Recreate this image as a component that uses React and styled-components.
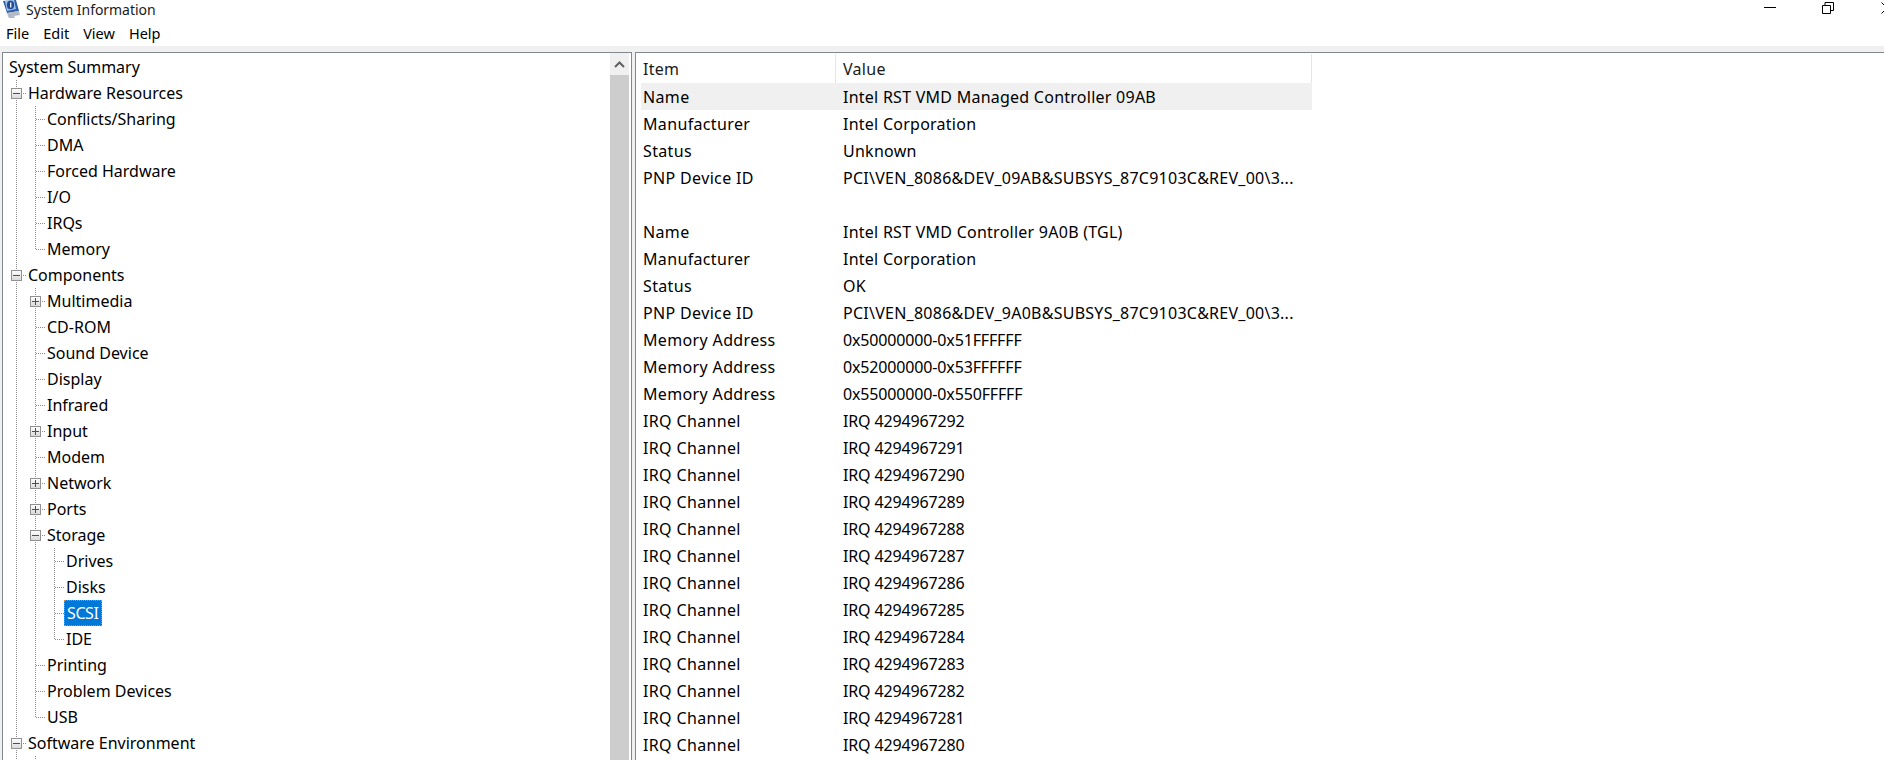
import styled, { createGlobalStyle } from "styled-components";

const GlobalStyle = createGlobalStyle`
  html, body {
    margin: 0;
    padding: 0;
    background: #fff;
    overflow: hidden;
  }
  body {
    font-family: "Noto Sans", "Open Sans", sans-serif;
    font-size: 16px;
    color: #000;
  }
`;

const Window = styled.div`
  width: 1884px;
  height: 760px;
  display: flex;
  flex-direction: column;
  overflow: hidden;
  background: #fff;
`;

const TitleBar = styled.div`
  height: 19px;
  display: flex;
  align-items: center;
  flex: none;
`;
const AppIconBox = styled.svg`
  width: 20px;
  height: 19px;
  margin-left: 2px;
  flex: none;
`;
const TitleText = styled.span`
  margin-left: 4px;
  flex: 1;
  font-size: 14px;
  letter-spacing: -0.05px;
  color: #1a1a1a;
`;
const WindowButton = styled.div`
  width: 58px;
  height: 19px;
  box-sizing: border-box;
  padding-top: 2px;
  display: flex;
  justify-content: center;
  flex: none;
`;
const CloseButton = styled(WindowButton)`
  width: 27px;
  padding-left: 24px;
  justify-content: flex-start;
  overflow: hidden;
  svg {
    flex: none;
  }
`;

const MenuBar = styled.div`
  height: 27px;
  display: flex;
  align-items: center;
  padding-left: 6px;
  gap: 14px;
  flex: none;
  font-size: 14.5px;
`;

const Workspace = styled.div`
  flex: 1;
  min-height: 0;
  display: flex;
  background: #f0f0f0;
  padding: 6px 0 0 2px;
`;

const TreePanel = styled.div`
  width: 630px;
  flex: none;
  display: flex;
  box-sizing: border-box;
  border: 1px solid #828790;
  border-bottom: none;
  background: #fff;
`;
const Tree = styled.div`
  flex: 1;
  padding: 1px 0 0 4px;
  overflow: hidden;
`;
const TreeRow = styled.div`
  height: 26px;
  display: flex;
  align-items: stretch;
`;
const DOTS_V = "repeating-linear-gradient(to bottom, #8a8a8a 0 1px, transparent 1px 2px)";
const DOTS_H = "repeating-linear-gradient(to right, #8a8a8a 0 1px, transparent 1px 2px)";
const GUIDES = {
  pass: `background-image: ${DOTS_V}; background-size: 1px 100%; background-position: 9px 0;`,
  tee: `background-image: ${DOTS_V}, ${DOTS_H};
    background-size: 1px 100%, 9px 1px;
    background-position: 9px 0, 10px 13px;`,
  end: `background-image: ${DOTS_V}, ${DOTS_H};
    background-size: 1px 13px, 9px 1px;
    background-position: 9px 0, 10px 13px;`,
};
const Guide = styled.div`
  width: 19px;
  flex: none;
  display: flex;
  align-items: center;
  justify-content: center;
  background-repeat: no-repeat;
  ${({ $kind }) => GUIDES[$kind]}
`;
const Expander = styled.svg`
  width: 11px;
  height: 11px;
  display: block;
`;
const TreeLabel = styled.span`
  padding: 0 2px;
  line-height: 26px;
  color: #000;
  white-space: nowrap;
  box-sizing: border-box;
  ${({ $selected }) =>
    $selected &&
    `
    width: 38px;
    padding: 0 3px;
    letter-spacing: -0.4px;
    background: #0078d7;
    color: #fff;
    outline: 1px dotted #d98a2b;
    outline-offset: -1px;
  `}
`;

const ScrollBar = styled.div`
  width: 19px;
  flex: none;
  display: flex;
  flex-direction: column;
  margin-right: 2px;
  background: #f0f0f0;
`;
const ScrollButton = styled.div`
  height: 22px;
  flex: none;
  display: flex;
  align-items: center;
  justify-content: center;
`;
const ScrollThumb = styled.div`
  flex: 1;
  background: #cdcdcd;
`;

const ListPanel = styled.div`
  flex: 1;
  min-width: 0;
  margin-left: 3px;
  box-sizing: border-box;
  border-top: 1px solid #828790;
  border-left: 1px solid #828790;
  background: #fff;
  padding-left: 5px;
  overflow: hidden;
`;
const HeaderRow = styled.div`
  width: 671px;
  height: 30px;
  display: flex;
`;
const HeaderCell = styled.div`
  width: ${({ $w }) => $w}px;
  box-sizing: border-box;
  flex: none;
  padding-left: ${({ $pad }) => $pad}px;
  border-right: 1px solid #e5e5e5;
  line-height: 30px;
  margin-top: 1px;
  letter-spacing: 0.3px;
  color: #1a1a1a;
`;
const ListRow = styled.div`
  width: 671px;
  height: 27px;
  display: flex;
  align-items: center;
  background: ${({ $active }) => ($active ? "#f0f0f0" : "transparent")};
`;
const ItemCell = styled.div`
  width: 195px;
  flex: none;
  padding-left: 2px;
  box-sizing: border-box;
  white-space: nowrap;
  letter-spacing: 0.35px;
`;
const ValueCell = styled.div`
  flex: 1;
  padding-left: 7px;
  white-space: nowrap;
  letter-spacing: ${({ $numeric }) => ($numeric ? "-0.15px" : "0.25px")};
`;

const tree = [
  { guides: [], label: "System Summary" },
  { guides: ["tee"], box: "minus", label: "Hardware Resources" },
  { guides: ["pass", "tee"], label: "Conflicts/Sharing" },
  { guides: ["pass", "tee"], label: "DMA" },
  { guides: ["pass", "tee"], label: "Forced Hardware" },
  { guides: ["pass", "tee"], label: "I/O" },
  { guides: ["pass", "tee"], label: "IRQs" },
  { guides: ["pass", "end"], label: "Memory" },
  { guides: ["tee"], box: "minus", label: "Components" },
  { guides: ["pass", "tee"], box: "plus", label: "Multimedia" },
  { guides: ["pass", "tee"], label: "CD-ROM" },
  { guides: ["pass", "tee"], label: "Sound Device" },
  { guides: ["pass", "tee"], label: "Display" },
  { guides: ["pass", "tee"], label: "Infrared" },
  { guides: ["pass", "tee"], box: "plus", label: "Input" },
  { guides: ["pass", "tee"], label: "Modem" },
  { guides: ["pass", "tee"], box: "plus", label: "Network" },
  { guides: ["pass", "tee"], box: "plus", label: "Ports" },
  { guides: ["pass", "tee"], box: "minus", label: "Storage" },
  { guides: ["pass", "pass", "tee"], label: "Drives" },
  { guides: ["pass", "pass", "tee"], label: "Disks" },
  { guides: ["pass", "pass", "tee"], label: "SCSI", selected: true },
  { guides: ["pass", "pass", "end"], label: "IDE" },
  { guides: ["pass", "tee"], label: "Printing" },
  { guides: ["pass", "tee"], label: "Problem Devices" },
  { guides: ["pass", "end"], label: "USB" },
  { guides: ["tee"], box: "minus", label: "Software Environment" },
  { guides: ["pass", "tee"], label: "" },
];

const irqs = [292, 291, 290, 289, 288, 287, 286, 285, 284, 283, 282, 281, 280];

const rows = [
  ["Name", "Intel RST VMD Managed Controller 09AB"],
  ["Manufacturer", "Intel Corporation"],
  ["Status", "Unknown"],
  ["PNP Device ID", "PCI\\VEN_8086&DEV_09AB&SUBSYS_87C9103C&REV_00\\3..."],
  ["", ""],
  ["Name", "Intel RST VMD Controller 9A0B (TGL)"],
  ["Manufacturer", "Intel Corporation"],
  ["Status", "OK"],
  ["PNP Device ID", "PCI\\VEN_8086&DEV_9A0B&SUBSYS_87C9103C&REV_00\\3..."],
  ["Memory Address", "0x50000000-0x51FFFFFF"],
  ["Memory Address", "0x52000000-0x53FFFFFF"],
  ["Memory Address", "0x55000000-0x550FFFFF"],
  ...irqs.map((n) => ["IRQ Channel", `IRQ 4294967${n}`]),
];

function AppIcon() {
  return (
    <AppIconBox viewBox="0 0 20 19">
      <path d="M1 1l13-1 3 11-12 2z" fill="#2f5ea8" />
      <path d="M3 1l9-1 2 9-9 2z" fill="#9cc0ea" />
      <ellipse cx="8.5" cy="5" rx="3.6" ry="4.2" fill="#1f4a96" />
      <rect x="8" y="2.5" width="1.4" height="5" fill="#e6eefa" />
      <path d="M5 13l12-2 1 4-6 1 1 2H7l-1-2z" fill="#b4bac4" />
    </AppIconBox>
  );
}

function ExpanderBox({ type }) {
  return (
    <Expander viewBox="0 0 11 11">
      <defs>
        <linearGradient id="boxFill" x1="0" y1="0" x2="0" y2="1">
          <stop offset="0" stopColor="#ffffff" />
          <stop offset="1" stopColor="#d8d8d8" />
        </linearGradient>
      </defs>
      <rect x="0.5" y="0.5" width="10" height="10" fill="url(#boxFill)" stroke="#919191" />
      <rect x="2" y="5" width="7" height="1" fill="#34508f" />
      {type === "plus" && <rect x="5" y="2" width="1" height="7" fill="#34508f" />}
    </Expander>
  );
}

export default function App() {
  return (
    <Window>
      <GlobalStyle />
      <TitleBar>
        <AppIcon />
        <TitleText>System Information</TitleText>
        <WindowButton>
          <svg width="12" height="12" viewBox="0 0 12 12">
            <rect x="0" y="5" width="12" height="1" fill="#000" />
          </svg>
        </WindowButton>
        <WindowButton>
          <svg width="12" height="12" viewBox="0 0 12 12">
            <path d="M.5 3.5h8v8h-8zM3 3.5v-3h8.500v8h-3" fill="none" stroke="#000" />
          </svg>
        </WindowButton>
        <CloseButton>
          <svg width="12" height="12" viewBox="0 0 12 12">
            <path d="M.5.5l11 11M11.5.5l-11 11" fill="none" stroke="#000" />
          </svg>
        </CloseButton>
      </TitleBar>
      <MenuBar>
        <span>File</span>
        <span>Edit</span>
        <span>View</span>
        <span>Help</span>
      </MenuBar>
      <Workspace>
        <TreePanel>
          <Tree>
            {tree.map((node, i) => (
              <TreeRow key={i}>
                {node.guides.map((g, j) => (
                  <Guide key={j} $kind={g}>
                    {node.box && j === node.guides.length - 1 && <ExpanderBox type={node.box} />}
                  </Guide>
                ))}
                <TreeLabel $selected={node.selected}>{node.label}</TreeLabel>
              </TreeRow>
            ))}
          </Tree>
          <ScrollBar>
            <ScrollButton>
              <svg width="11" height="7" viewBox="0 0 11 7">
                <path d="M1 6l4.500-4.500L10 6" fill="none" stroke="#606060" strokeWidth="2" />
              </svg>
            </ScrollButton>
            <ScrollThumb />
          </ScrollBar>
        </TreePanel>
        <ListPanel>
          <HeaderRow>
            <HeaderCell $w={195} $pad={2}>Item</HeaderCell>
            <HeaderCell $w={476} $pad={7}>Value</HeaderCell>
          </HeaderRow>
          {rows.map(([item, value], i) => (
            <ListRow key={i} $active={i === 0}>
              <ItemCell>{item}</ItemCell>
              <ValueCell $numeric={/^(0x|IRQ)/.test(value)}>{value}</ValueCell>
            </ListRow>
          ))}
        </ListPanel>
      </Workspace>
    </Window>
  );
}
